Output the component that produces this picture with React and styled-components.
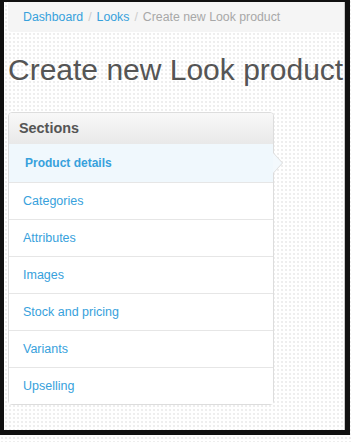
import React from 'react'
import styled, { createGlobalStyle } from 'styled-components'

const GlobalStyle = createGlobalStyle`
    html, body {
        margin: 0;
        padding: 0;
    }
    body {
        width: 352px;
        height: 442px;
        overflow: hidden;
        font-family: "Liberation Sans", Arial, Helvetica, sans-serif;
        background-color: #ffffff;
        background-image: radial-gradient(circle, #ededed 0.7px, transparent 0.8px);
        background-size: 4px 4px;
    }
`

const sections = [
    'Product details',
    'Categories',
    'Attributes',
    'Images',
    'Stock and pricing',
    'Variants',
    'Upselling',
]

export default function App() {
    return (
        <>
            <GlobalStyle />
            <Frame>
                <Inner>
                    <Breadcrumb>
                        <Crumb href="#">Dashboard</Crumb>
                        <Divider>/</Divider>
                        <Crumb href="#">Looks</Crumb>
                        <Divider>/</Divider>
                        <Current>Create new Look product</Current>
                    </Breadcrumb>

                    <Title>Create new Look product</Title>

                    <Panel>
                        <PanelHeader>Sections</PanelHeader>
                        {sections.map((name, i) => (
                            <Item key={name} $active={i === 0} $first={i === 0}>
                                <a href="#">{name}</a>
                            </Item>
                        ))}
                    </Panel>
                </Inner>
            </Frame>
        </>
    )
}

const Frame = styled.div`
    box-sizing: border-box;
    width: 350px;
    height: 435px;
    border-style: solid;
    border-color: #111111;
    border-width: 2px 5px 5px 4px;
`

const Inner = styled.div`
    box-sizing: border-box;
    height: 100%;
    border-right: 1px solid #c8c8c8;
    overflow: hidden;
`

const Breadcrumb = styled.div`
    margin-left: 4px;
    height: 30px;
    padding-left: 15px;
    display: flex;
    align-items: center;
    background: #f5f5f5;
    border-bottom-left-radius: 4px;
    font-size: 12.3px;
    white-space: nowrap;
`

const Crumb = styled.a`
    color: #37a1dc;
    text-decoration: none;
`

const Divider = styled.span`
    color: #cccccc;
    padding: 0 5px;
`

const Current = styled.span`
    color: #a8a8a8;
`

const Title = styled.h1`
    margin: 20px 0 0 4px;
    font-size: 30px;
    line-height: 36px;
    font-weight: 400;
    color: #555555;
    white-space: nowrap;
`

const Panel = styled.div`
    margin: 24px 0 0 4px;
    width: 266px;
    box-sizing: border-box;
    border: 1px solid #dddddd;
    border-radius: 4px;
    background: #ffffff;
`

const PanelHeader = styled.div`
    height: 31px;
    line-height: 31px;
    padding-left: 10px;
    font-size: 14.4px;
    font-weight: 700;
    color: #555555;
    background: linear-gradient(to bottom, #f8f8f8, #e9e9e9);
    border-radius: 3px 3px 0 0;
`

const Item = styled.div`
    position: relative;
    height: ${p => (p.$first ? '38px' : '36px')};
    border-top: ${p => (p.$first ? 'none' : '1px solid #e6e6e6')};
    background: ${p => (p.$active ? '#f0f8fd' : '#ffffff')};
    display: flex;
    align-items: center;
    padding-left: ${p => (p.$active ? '16px' : '14px')};
    font-size: 12.5px;

    a {
        color: #37a1dc;
        text-decoration: none;
        font-weight: ${p => (p.$active ? 700 : 400)};
        font-size: ${p => (p.$active ? '12px' : '12.5px')};
    }

    ${p => p.$active && `
        &::before, &::after {
            content: "";
            position: absolute;
            top: 50%;
            width: 0;
            height: 0;
            border-style: solid;
        }
        &::before {
            left: 100%;
            margin-top: -11px;
            border-width: 11px 0 11px 10px;
            border-color: transparent transparent transparent #dcdcdc;
        }
        &::after {
            left: 100%;
            margin-top: -10px;
            border-width: 10px 0 10px 9px;
            border-color: transparent transparent transparent #f3f9fd;
        }
    `}
`
